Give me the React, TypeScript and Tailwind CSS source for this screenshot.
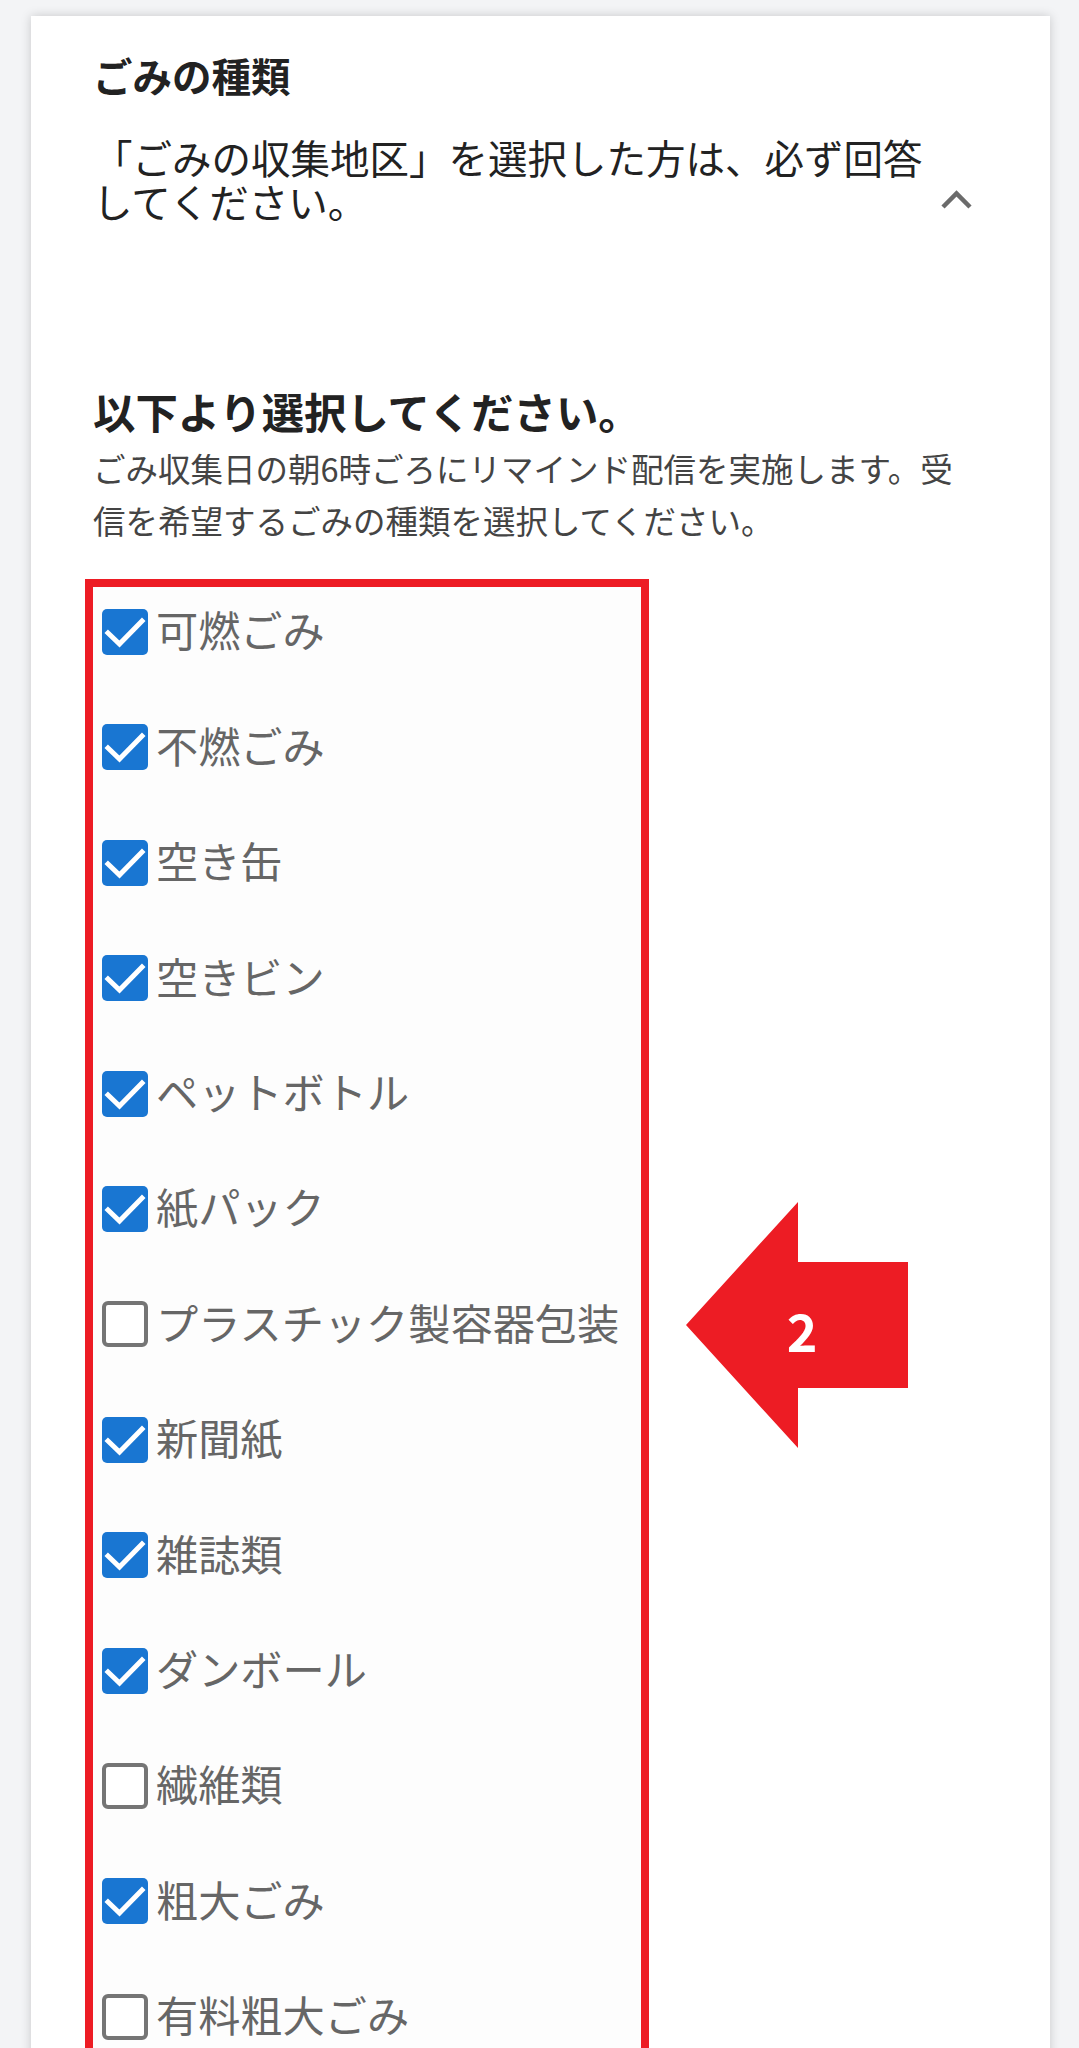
import React from "react";

const items: { label: string; checked: boolean }[] = [
  { label: "可燃ごみ", checked: true },
  { label: "不燃ごみ", checked: true },
  { label: "空き缶", checked: true },
  { label: "空きビン", checked: true },
  { label: "ペットボトル", checked: true },
  { label: "紙パック", checked: true },
  { label: "プラスチック製容器包装", checked: false },
  { label: "新聞紙", checked: true },
  { label: "雑誌類", checked: true },
  { label: "ダンボール", checked: true },
  { label: "繊維類", checked: false },
  { label: "粗大ごみ", checked: true },
  { label: "有料粗大ごみ", checked: false },
];

function Box({ checked }: { checked: boolean }) {
  if (checked) {
    return (
      <div className="w-[46px] h-[46px] shrink-0 rounded-[5px] bg-[#1976d2] flex items-center justify-center">
        <svg width="46" height="46" viewBox="0 0 46 46">
          <polyline points="6,24 17.5,35 40,12" fill="none" stroke="#ffffff" strokeWidth="5" strokeLinecap="square" />
        </svg>
      </div>
    );
  }
  return <div className="w-[46px] h-[46px] shrink-0 rounded-[6px] border-[4px] border-[#757575] bg-white" />;
}

export default function App() {
  return (
    <div
      className="min-h-screen bg-[#f3f4f6] pt-[16px] pl-[31px] pr-[29px] overflow-hidden h-[2048px]"
      style={{ fontFamily: '"Noto Sans CJK JP", "Noto Sans", sans-serif' }}
    >
      <div className="relative bg-white shadow-[0_0_10px_rgba(0,0,0,0.18)] h-[2100px]">
        <div className="pl-[62px] pt-[36px]">
          <div className="text-[39.5px] leading-[46px] font-bold text-[#222]">ごみの種類</div>
          <div className="flex items-start mt-[37px]">
            <div className="w-[850px] text-[39.5px] leading-[44px] text-[#222]">
              「ごみの収集地区」を選択した方は、必ず回答してください。
            </div>
            <svg className="mt-[55px] ml-[-3px]" width="33" height="20" viewBox="0 0 33 20">
              <polyline points="3,17 16.5,3.5 30,17" fill="none" stroke="#6b6b6b" strokeWidth="4.5" />
            </svg>
          </div>
          <div className="mt-[164px] text-[42.4px] leading-[48px] font-bold text-[#222]">以下より選択してください。</div>
          <div className="mt-[7px] w-[880px] text-[32.5px] leading-[52px] text-[#444]">
            ごみ収集日の朝6時ごろにリマインド配信を実施します。受信を希望するごみの種類を選択してください。
          </div>
        </div>
        <div className="ml-[54px] mt-[33px] w-[564px] border-[8px] border-[#ed1c24] h-[1600px] bg-[#fdfdfd]">
          <div className="flex flex-col gap-[69.4px] pt-[22px] pl-[9px]">
            {items.map((it) => (
              <div key={it.label} className="flex items-center h-[46px] gap-[8px]">
                <Box checked={it.checked} />
                <span className="text-[42.2px] leading-none text-[#666] -mt-[5px] whitespace-nowrap">{it.label}</span>
              </div>
            ))}
          </div>
        </div>
        <div className="absolute left-[655px] top-[1186px] w-[222px] h-[246px]">
          <svg width="222" height="246" viewBox="0 0 222 246">
            <polygon points="0,123 112,0 112,60 222,60 222,186 112,186 112,246" fill="#ed1c24" />
          </svg>
          <span className="absolute left-[86px] top-[96px] w-[60px] text-center text-[52px] leading-[64px] font-bold text-white">
            2
          </span>
        </div>
      </div>
    </div>
  );
}
